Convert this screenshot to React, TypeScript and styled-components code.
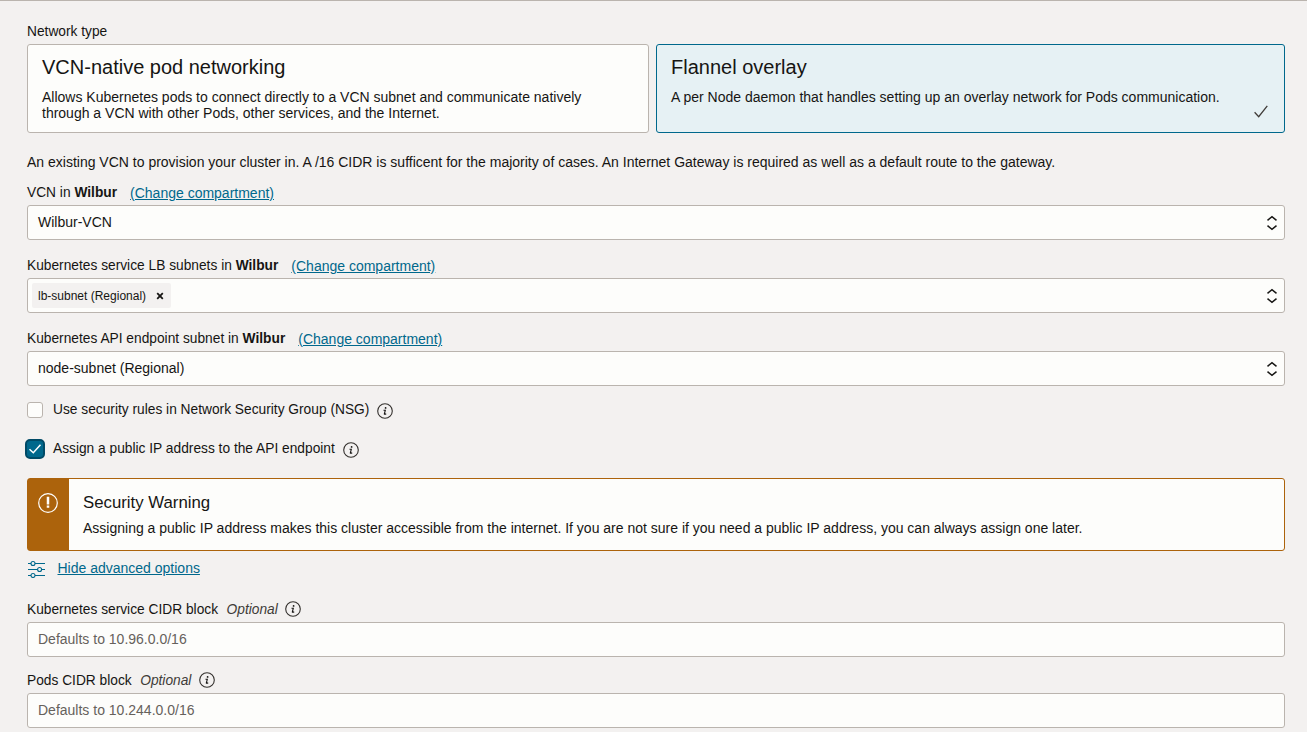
import React from "react";
import styled, { createGlobalStyle, css } from "styled-components";

const ink = "#161513";
const line = "#bab4ae";
const teal = "#00688c";
const amber = "#ac630c";

const GlobalStyle = createGlobalStyle`
  *, *::before, *::after { box-sizing: border-box; }
  html, body { margin: 0; height: 100%; overflow: hidden; background: #f3f1f0; }
  body { font: 14px/16px "Liberation Sans", Arial, sans-serif; color: ${ink}; }
  svg { display: block; flex: none; }
`;

const Page = styled.main`
  display: flex;
  flex-direction: column;
  height: 732px;
  padding: 22px 22px 0 27px;
  border-top: 1px solid ${line};
  overflow: hidden;
  white-space: nowrap;
`;

const Caption = styled.span`
  font-size: 13.76px;
  line-height: 18px;
`;

const Cards = styled.div`
  display: grid;
  grid-template-columns: 622px 629px;
  gap: 7px;
  height: 89px;
  margin-top: 3px;
`;

const Card = styled.div<{ $selected?: boolean }>`
  display: flex;
  justify-content: space-between;
  padding: 10px 14px 0;
  border: 1px solid ${(p) => (p.$selected ? teal : line)};
  border-radius: 3px;
  background: ${(p) => (p.$selected ? "#e6f1f4" : "#fdfdfb")};
`;

const CardTitle = styled.h2`
  margin: 0 0 10px;
  font-size: 20px;
  line-height: 24px;
  font-weight: 400;
`;

const CardText = styled.p`
  margin: 0;
`;

const CardCheck = styled.div`
  padding: 50px 2px 0 0;
`;

const Intro = styled.p`
  margin: 21px 0 0;
`;

const Field = styled.section<{ $top: number }>`
  margin-top: ${(p) => p.$top}px;
`;

const Label = styled.div`
  display: flex;
  align-items: flex-start;
  height: 21px;
`;

const Link = styled.a<{ $nudge?: boolean }>`
  color: ${teal};
  text-decoration: underline;
  text-underline-offset: 1px;
  ${(p) => p.$nudge && css`margin: 1px 0 0 13px;`}
`;

const Optional = styled.em`
  margin: 0 7.5px 0 8.5px;
  font-size: 13.76px;
  line-height: 18px;
  color: #403c38;
`;

const Box = styled.div<{ $hint?: boolean; $tagged?: boolean }>`
  display: flex;
  align-items: center;
  justify-content: space-between;
  height: 35px;
  padding: 0 5px 0 ${(p) => (p.$tagged ? 4 : 10)}px;
  border: 1px solid ${line};
  border-radius: 3px;
  background: #fdfdfb;
  color: ${(p) => (p.$hint ? "#66615c" : ink)};
`;

const Value = styled.span`
  padding-bottom: 1px;
`;

const Chip = styled.span`
  display: flex;
  align-items: center;
  justify-content: space-between;
  width: 139px;
  height: 25px;
  padding: 0 7px 0 6px;
  border-radius: 2px;
  background: #f3f1f0;
  font-size: 12px;
`;

const CheckRow = styled.div<{ $top: number }>`
  display: flex;
  height: 18px;
  margin-top: ${(p) => p.$top}px;
`;

const CheckBox = styled.span<{ $on?: boolean }>`
  display: flex;
  align-items: center;
  justify-content: center;
  width: ${(p) => (p.$on ? 20 : 16)}px;
  height: ${(p) => (p.$on ? 20 : 16)}px;
  margin: ${(p) => (p.$on ? "-1px 8px 0 -2px" : "1px 10px 0 0")};
  border: ${(p) => (p.$on ? "2px solid #004a66" : `1px solid ${line}`)};
  border-radius: ${(p) => (p.$on ? 5 : 3)}px;
  background: ${(p) => (p.$on ? teal : "#fdfdfb")};
`;

const InfoSlot = styled.span<{ $left?: number }>`
  margin: ${(p) => (p.$left ? `2px 0 0 ${p.$left}px` : "0")};
`;

const Warning = styled.section`
  display: flex;
  height: 73px;
  margin-top: 20px;
  border: 1px solid ${amber};
  border-radius: 3px;
  background: #fdfdfb;
`;

const WarningSide = styled.div`
  width: 41px;
  padding: 14px 0 0 10px;
  background: ${amber};
`;

const WarningBody = styled.div`
  padding: 14px 0 0 14px;
`;

const WarningTitle = styled.h3`
  margin: 0 0 7px;
  font-size: 16.8px;
  line-height: 20px;
  font-weight: 400;
`;

const Advanced = styled.div`
  display: flex;
  gap: 12.5px;
  height: 18px;
  margin-top: 9px;
`;

const InfoIcon = () => (
  <svg width="16" height="16" viewBox="0 0 16 16" fill="none">
    <circle cx="8" cy="8" r="7.3" stroke="#33302d" strokeWidth="1.1" />
    <circle cx="8.6" cy="4.9" r=".9" fill={ink} />
    <path d="M6.5 7.3H8.3L7.3 11.1Q7.4 11.6 9.2 10.7" stroke={ink} strokeWidth="1.1" />
  </svg>
);

const UpDown = () => (
  <svg width="14" height="18" viewBox="0 0 14 18" fill="none" stroke={ink} strokeWidth="1.5">
    <path d="M2.5 6.3 7 2.6l4.5 3.7M2.5 11.7 7 15.4l4.5-3.7" />
  </svg>
);

const Sliders = () => (
  <svg width="18" height="18" viewBox="0 0 18 18" fill="none" stroke={teal} strokeWidth="1.1">
    <path d="M1 3.5h3M8 3.5h10M1 9.5h9.5M14.7 9.5H18M1 15.5h3M8 15.5h10" />
    <circle cx="6" cy="3.5" r="2" />
    <circle cx="12.6" cy="9.5" r="2" />
    <circle cx="6" cy="15.5" r="2" />
  </svg>
);

const CompartmentField = ({ label, top, tagged, children }: { label: string; top: number; tagged?: boolean; children: React.ReactNode }) => (
  <Field $top={top}>
    <Label>
      <Caption>{label} <b>Wilbur</b></Caption>
      <Link $nudge>(Change compartment)</Link>
    </Label>
    <Box $tagged={tagged}>
      {children}
      <UpDown />
    </Box>
  </Field>
);

const CidrField = ({ label, hint, top }: { label: string; hint: string; top: number }) => (
  <Field $top={top}>
    <Label>
      <Caption>{label}</Caption>
      <Optional>Optional</Optional>
      <InfoSlot><InfoIcon /></InfoSlot>
    </Label>
    <Box $hint><Value>{hint}</Value></Box>
  </Field>
);

export default function App() {
  return (
    <>
      <GlobalStyle />
      <Page>
        <Caption>Network type</Caption>
        <Cards>
          <Card>
            <div>
              <CardTitle>VCN-native pod networking</CardTitle>
              <CardText>
                Allows Kubernetes pods to connect directly to a VCN subnet and communicate natively
                <br />
                through a VCN with other Pods, other services, and the Internet.
              </CardText>
            </div>
          </Card>
          <Card $selected>
            <div>
              <CardTitle>Flannel overlay</CardTitle>
              <CardText>A per Node daemon that handles setting up an overlay network for Pods communication.</CardText>
            </div>
            <CardCheck>
              <svg width="14" height="13" viewBox="0 0 14 13" fill="none" stroke="#403c38" strokeWidth="1.3">
                <path d="M.6 7.3 4.7 11.7 13.3.8" />
              </svg>
            </CardCheck>
          </Card>
        </Cards>
        <Intro>An existing VCN to provision your cluster in. A /16 CIDR is sufficent for the majority of cases. An Internet Gateway is required as well as a default route to the gateway.</Intro>
        <CompartmentField label="VCN in" top={14}><Value>Wilbur-VCN</Value></CompartmentField>
        <CompartmentField label="Kubernetes service LB subnets in" top={17} tagged>
          <Chip>
            lb-subnet (Regional)
            <svg width="8" height="8" viewBox="0 0 8 8" stroke={ink} strokeWidth="1.8">
              <path d="M1.2 1.2 6.8 6.8M6.8 1.2 1.2 6.8" />
            </svg>
          </Chip>
        </CompartmentField>
        <CompartmentField label="Kubernetes API endpoint subnet in" top={17}><Value>node-subnet (Regional)</Value></CompartmentField>
        <CheckRow $top={15}>
          <CheckBox />
          <Caption>Use security rules in Network Security Group (NSG)</Caption>
          <InfoSlot $left={7.5}><InfoIcon /></InfoSlot>
        </CheckRow>
        <CheckRow $top={21}>
          <CheckBox $on>
            <svg width="14" height="12" viewBox="0 0 14 12" fill="none" stroke="#fff" strokeWidth="1.5">
              <path d="M1.5 6.2 5.3 9.8 12.5 1.8" />
            </svg>
          </CheckBox>
          <Caption>Assign a public IP address to the API endpoint</Caption>
          <InfoSlot $left={8}><InfoIcon /></InfoSlot>
        </CheckRow>
        <Warning>
          <WarningSide>
            <svg width="20" height="20" viewBox="0 0 20 20" fill="none" stroke="#fff">
              <circle cx="10" cy="10" r="9.3" strokeWidth="1.2" />
              <path d="M10 3.8v7.6M10 12.6v2.2" strokeWidth="2.5" />
            </svg>
          </WarningSide>
          <WarningBody>
            <WarningTitle>Security Warning</WarningTitle>
            <span>Assigning a public IP address makes this cluster accessible from the internet. If you are not sure if you need a public IP address, you can always assign one later.</span>
          </WarningBody>
        </Warning>
        <Advanced>
          <Sliders />
          <Link>Hide advanced options</Link>
        </Advanced>
        <CidrField label="Kubernetes service CIDR block" hint="Defaults to 10.96.0.0/16" top={23} />
        <CidrField label="Pods CIDR block" hint="Defaults to 10.244.0.0/16" top={15} />
      </Page>
    </>
  );
}
